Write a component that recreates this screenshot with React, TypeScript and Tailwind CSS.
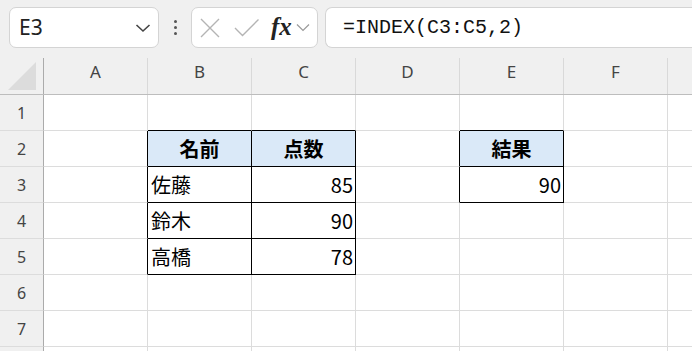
import React from "react";

type Cell = { text: string; kind: "head" | "name" | "num" };

const COLS = ["A", "B", "C", "D", "E", "F", "G"];
const ROWS = [1, 2, 3, 4, 5, 6, 7, 8];

const cells: Record<string, Cell> = {
  B2: { text: "名前", kind: "head" },
  C2: { text: "点数", kind: "head" },
  B3: { text: "佐藤", kind: "name" },
  C3: { text: "85", kind: "num" },
  B4: { text: "鈴木", kind: "name" },
  C4: { text: "90", kind: "num" },
  B5: { text: "高橋", kind: "name" },
  C5: { text: "78", kind: "num" },
  E2: { text: "結果", kind: "head" },
  E3: { text: "90", kind: "num" },
};

const uiFont = { fontFamily: '"Noto Sans", "Open Sans", sans-serif' };
const cellFont = { fontFamily: '"Noto Sans CJK JP", "Noto Sans", sans-serif' };

function inTable(col: number, row: number) {
  const c = COLS[col];
  return c !== undefined && !!cells[`${c}${row}`];
}

function Toolbar() {
  return (
    <div className="h-[58px] flex items-start pt-[7px] pl-[9px] bg-[#f0f0f0]">
      {/* name box */}
      <div className="w-[150px] h-[41px] bg-white rounded-[7px] border border-[#d4d4d4] flex items-center justify-between pl-[9px] pr-[7px]">
        <span className="text-[21px] text-[#222] leading-none" style={uiFont}>
          E3
        </span>
        <svg width="16" height="10" viewBox="0 0 16 10">
          <path d="M1.5 2 L8 8 L14.5 2" fill="none" stroke="#444" strokeWidth="1.6" />
        </svg>
      </div>
      {/* dots */}
      <div className="w-[32px] h-[41px] flex flex-col items-center justify-center gap-[3px]">
        <span className="w-[3px] h-[3px] rounded-full bg-[#555]" />
        <span className="w-[3px] h-[3px] rounded-full bg-[#555]" />
        <span className="w-[3px] h-[3px] rounded-full bg-[#555]" />
      </div>
      {/* cancel / enter / fx */}
      <div className="w-[127px] h-[41px] bg-white rounded-[7px] border border-[#d4d4d4] flex items-center pl-[8px]">
        <svg width="20" height="20" viewBox="0 0 20 20">
          <path d="M1 1 L19 19 M19 1 L1 19" stroke="#b4b4b4" strokeWidth="1.4" />
        </svg>
        <svg width="26" height="20" viewBox="0 0 26 20" className="ml-[14px]">
          <path d="M1 10 L8.5 17.5 L24.5 1.5" fill="none" stroke="#b4b4b4" strokeWidth="1.4" />
        </svg>
        <span
          className="ml-[11px] text-[25px] italic font-semibold text-[#222] leading-none -mt-[3px]"
          style={{ fontFamily: '"Liberation Serif", "DejaVu Serif", serif' }}
        >
          fx
        </span>
        <svg width="14" height="9" viewBox="0 0 14 9" className="ml-[4px]">
          <path d="M1 1.5 L7 7.5 L13 1.5" fill="none" stroke="#9a9a9a" strokeWidth="1.2" />
        </svg>
      </div>
      {/* formula input */}
      <div className="ml-[7px] flex-1 h-[41px] bg-white rounded-l-[7px] border border-r-0 border-[#d4d4d4] flex items-center pl-[17px]">
        <span
          className="text-[20px] text-[#111] leading-none"
          style={{ fontFamily: '"Liberation Mono", "DejaVu Sans Mono", monospace' }}
        >
          =INDEX(C3:C5,2)
        </span>
      </div>
    </div>
  );
}

function HeaderRow() {
  return (
    <div className="flex h-[37px] bg-[#f0f0f0] border-b border-[#bdbdbd]">
      <div className="w-[44px] shrink-0 h-full border-r border-[#ababab] flex items-end justify-center pb-[3px]">
        <svg width="30" height="30" viewBox="0 0 30 30">
          <path d="M1 29 L29 29 L29 1 Z" fill="#dcdcdc" />
        </svg>
      </div>
      {COLS.map((c, i) => (
        <div
          key={c}
          className="w-[104px] shrink-0 h-full border-r border-[#d9d9d9] flex items-center justify-center pb-[9px] text-[17px] text-[#444]"
          style={uiFont}
        >
          {/* last column is mostly off screen */}
          {i < COLS.length - 1 ? c : ""}
        </div>
      ))}
    </div>
  );
}

function GridRow({ row }: { row: number }) {
  const last = row === ROWS[ROWS.length - 1];
  return (
    <div className="flex h-[36px]">
      <div
        className="w-[44px] shrink-0 h-full bg-[#f0f0f0] border-r border-b border-r-[#ababab] border-b-[#dcdcdc] flex items-center justify-center text-[16px] text-[#444]"
        style={uiFont}
      >
        {last ? "" : row}
      </div>
      {COLS.map((c, i) => {
        const cell = cells[`${c}${row}`];
        const blackRight = inTable(i, row) || inTable(i + 1, row);
        const blackBottom = inTable(i, row) || inTable(i, row + 1);
        let body = null;
        if (cell) {
          if (cell.kind === "head") {
            body = <div className="w-full text-center font-bold">{cell.text}</div>;
          } else if (cell.kind === "name") {
            body = <div className="w-full pl-[3px]">{cell.text}</div>;
          } else {
            body = <div className="w-full text-right pr-[2px]">{cell.text}</div>;
          }
        }
        return (
          <div
            key={c}
            className={`w-[104px] shrink-0 h-full border-r border-b flex items-center text-[20px] text-black leading-none ${
              blackRight ? "border-r-black" : "border-r-[#dcdcdc]"
            } ${blackBottom ? "border-b-black" : "border-b-[#dcdcdc]"} ${
              cell?.kind === "head" ? "bg-[#dae9f8]" : "bg-white"
            }`}
            style={cellFont}
          >
            {body}
          </div>
        );
      })}
    </div>
  );
}

export default function App() {
  return (
    <div className="w-[692px] h-[351px] overflow-hidden bg-white">
      <Toolbar />
      <HeaderRow />
      {ROWS.map((r) => (
        <GridRow key={r} row={r} />
      ))}
    </div>
  );
}
